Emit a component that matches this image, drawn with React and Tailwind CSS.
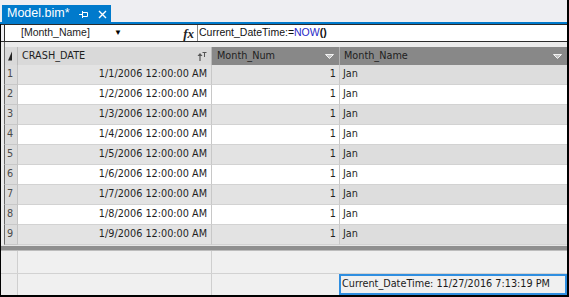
import React from 'react';

const rows = [1, 2, 3, 4, 5, 6, 7, 8, 9];

function PinIcon() {
  return (
    <svg width="9" height="8" viewBox="0 0 9 8" className="block">
      <path d="M0 4.5H3M3.5 1V8M3.5 2.5H8.5V6.5H3.5" stroke="#fff" strokeWidth="1" fill="none" />
    </svg>
  );
}

function CloseIcon() {
  return (
    <svg width="9" height="9" viewBox="0 0 9 9" className="block">
      <path d="M1 1L8 8M8 1L1 8" stroke="#fff" strokeWidth="1.4" />
    </svg>
  );
}

function SortIcon() {
  return (
    <svg width="10" height="10" viewBox="0 0 10 10" className="block">
      <path d="M3 10V4" stroke="#555" strokeWidth="1.2" />
      <path d="M0.5 5L3 2L5.5 5Z" fill="#555" />
      <path d="M5.5 1.5H9.5M7.5 1.5V6" stroke="#555" strokeWidth="1" />
    </svg>
  );
}

function FilterArrow() {
  return (
    <svg width="9" height="5" viewBox="0 0 9 5" className="block">
      <path d="M0.5 0.5H8.5L4.5 4.5Z" fill="#c4c4c4" stroke="#f2f2f2" strokeWidth="1" />
    </svg>
  );
}

function CornerIcon() {
  return (
    <svg width="6" height="10" viewBox="0 0 6 10" className="block">
      <path d="M5 0.5V9.5H1Z" fill="#222" />
    </svg>
  );
}

export default function App() {
  const grid = { fontFamily: '"DejaVu Sans", Tahoma, sans-serif' };
  const ui = { fontFamily: '"Liberation Sans", Arial, sans-serif' };

  return (
    <div className="w-[569px] h-[297px] flex flex-col bg-[#eeeef2] border-r-2 border-black overflow-hidden">
      {/* tab strip */}
      <div className="h-[22px] flex items-end pl-[2px]">
        <div className="h-[17px] w-[109px] bg-[#007acc] flex items-center pl-[5px] text-white text-[12.5px]" style={ui}>
          <span className="leading-none">Model.bim*</span>
          <span className="ml-[9px] mt-[1px]"><PinIcon /></span>
          <span className="ml-[10px] mt-[1px]"><CloseIcon /></span>
        </div>
      </div>
      <div className="h-[2px] bg-[#007acc]" />

      <div className="flex-1 flex flex-col border-l border-b-2 border-black bg-[#ececec]">
        {/* formula bar */}
        <div className="h-[18px] flex border-t border-b border-[#2a2a2a] bg-white">
          <div className="w-[3px] bg-[#eeeef2]" />
          <div className="w-[193px] flex items-center border-l border-[#2a2a2a] text-[10.5px] text-[#222]" style={ui}>
            <span className="ml-[16px]">[Month_Name]</span>
            <span className="ml-[24px] text-[8px] leading-none text-black">▼</span>
            <span
              className="ml-auto mr-[3px] text-[13px] italic font-bold text-[#222] leading-none"
              style={{ fontFamily: '"Liberation Serif", serif' }}
            >
              fx
            </span>
          </div>
          <div className="flex items-center border-l border-[#8a8a8a] pl-[1px] text-[10.5px] text-[#111]" style={ui}>
            Current_DateTime:=<span className="text-[#2828c8]">NOW</span><span className="font-bold">()</span>
          </div>
        </div>

        <div className="h-[5px] bg-[#ebebeb] flex">
          <div className="w-[3px]" />
          <div className="border-l border-[#6b6b6b]" />
        </div>

        {/* grid */}
        <div className="flex flex-col text-[9.7px] text-[#1e1e1e]" style={grid}>
          <div className="h-[18px] flex">
            <div className="w-[3px] bg-[#ececec]" />
            <div className="w-[14px] border-l border-[#6b6b6b] border-r border-r-[#bcbcbc] bg-[#d9d9d9] flex items-center pl-[2px]">
              <CornerIcon />
            </div>
            <div className="w-[194px] bg-[#d9d9d9] border-r border-[#b8b8b8] flex items-center pl-[4px] pr-[4px]">
              <span>CRASH_DATE</span>
              <span className="ml-auto"><SortIcon /></span>
            </div>
            <div className="w-[128px] bg-[#888888] border-r border-[#b0b0b0] flex items-center pl-[5px] pr-[5px]">
              <span>Month_Num</span>
              <span className="ml-auto"><FilterArrow /></span>
            </div>
            <div className="flex-1 bg-[#888888] flex items-center pl-[4px] pr-[5px]">
              <span>Month_Name</span>
              <span className="ml-auto"><FilterArrow /></span>
            </div>
          </div>

          {rows.map((n) => {
            const odd = n % 2 === 1;
            return (
              <div key={n} className="h-[20px] flex">
                <div className="w-[3px] bg-[#ececec]" />
                <div className="w-[14px] border-l border-[#6b6b6b] border-r border-r-[#c4c4c4] border-b border-b-[#c8c8c8] bg-[#dcdcdc] flex items-center pl-[2px] text-[#4a4a4a]">
                  {n}
                </div>
                <div className={`w-[194px] border-r border-[#c8c8c8] border-b border-b-[#d2d2d2] flex items-center justify-end pr-[4px] ${odd ? 'bg-[#e3e3e3]' : 'bg-white'}`}>
                  1/{n}/2006 12:00:00 AM
                </div>
                <div className={`w-[128px] border-r border-[#c8c8c8] border-b border-b-[#d2d2d2] flex items-center justify-end pr-[3px] ${odd ? 'bg-[#e3e3e3]' : 'bg-white'}`}>
                  1
                </div>
                <div className={`flex-1 border-b border-b-[#d2d2d2] flex items-center pl-[3px] ${odd ? 'bg-[#dddddd]' : 'bg-white'}`}>
                  Jan
                </div>
              </div>
            );
          })}

          {/* splitter */}
          <div className="h-[6px] flex flex-col">
            <div className="h-[1px] bg-[#e6e6e6]" />
            <div className="h-[4px] bg-[#8f8f8f]" />
            <div className="h-[1px] bg-[#bdbdbd]" />
          </div>

          {/* measure grid */}
          <div className="h-[23px] flex border-b border-[#d2d2d2]">
            <div className="w-[17px] border-r border-[#cfcfcf] bg-[#ececec]" />
            <div className="w-[194px] border-r border-[#cfcfcf] bg-[#f0f0f0]" />
            <div className="w-[128px] bg-[#f0f0f0]" />
            <div className="flex-1 bg-[#f0f0f0]" />
          </div>
          <div className="h-[21px] flex">
            <div className="w-[17px] border-r border-[#cfcfcf] bg-[#ececec]" />
            <div className="w-[194px] border-r border-[#cfcfcf] bg-[#f0f0f0]" />
            <div className="w-[127px] bg-[#f0f0f0]" />
            <div className="flex-1 border-2 border-[#2f8ee0] bg-[#f0f0f0] flex items-center pl-[1px] text-[#1a1a1a]">
              Current_DateTime: 11/27/2016 7:13:19 PM
            </div>
          </div>
        </div>
      </div>
    </div>
  );
}
